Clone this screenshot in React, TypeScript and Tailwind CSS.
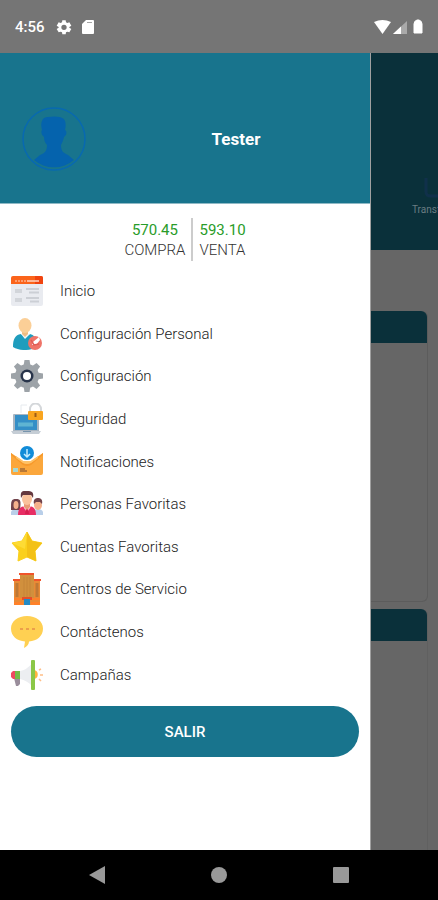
import type { ReactNode } from "react";

function Icon({ children }: { children: ReactNode }) {
  return (
    <svg viewBox="0 0 32 32" className="size-8 shrink-0" aria-hidden="true">
      {children}
    </svg>
  );
}

const HomeIcon = () => (
  <Icon>
    <path d="M0 8h32v21a2 2 0 0 1-2 2H2a2 2 0 0 1-2-2z" fill="#e9ebf0" />
    <path d="M2 1h28a2 2 0 0 1 2 2v6H0V3a2 2 0 0 1 2-2z" fill="#fb641b" />
    <path d="M24 1h6a2 2 0 0 1 2 2v6h-8z" fill="#f04410" />
    <path d="M4 6h11" stroke="#ffb08a" strokeWidth="1.500" strokeDasharray="2 1" />
    <path d="M16 6h12" stroke="#ffd5c2" strokeWidth="1.500" />
    <path d="M4 14h7v4H4zM4 23h7v4H4z" fill="#d2d5da" />
    <path d="M15 14h13M18 17.500h10M15 23h13M19 26.500h9" stroke="#cccfd5" strokeWidth="2" />
  </Icon>
);

const PersonalIcon = () => (
  <Icon>
    <path d="M2 29c0-8 2-12 8-13l4 3 5-3c4 1 6 4 7 7l-5 8c-7 2-14 1-19-2z" fill="#1f9dbd" />
    <path d="m10 16 4 5 5-5z" fill="#f6f6f6" />
    <path d="M11 12h6v4l-3 3-3-3z" fill="#f1bd83" />
    <ellipse cx="14" cy="7.500" rx="6.500" ry="7.500" fill="#fbcf97" />
    <circle cx="24" cy="25" r="7" fill="#ef7468" />
    <path d="m21 27 1-3 6-5 1 3-4 5z" fill="#fff" />
    <path d="m20 22 3 5 5-1" stroke="#e05e56" strokeWidth="1.500" fill="none" />
  </Icon>
);

const GearIcon = () => (
  <Icon>
    <g fill="#9da3a8">
      <circle cx="16" cy="16" r="12" />
      {[0, 45, 90, 135, 180, 225, 270, 315].map((angle) => (
        <path key={angle} d="M12.500 6 13.500 0h5l1 6z" transform={`rotate(${angle} 16 16)`} />
      ))}
    </g>
    <circle cx="16" cy="16" r="6.500" fill="#28344a" />
    <circle cx="16" cy="16" r="4" fill="#fff" />
  </Icon>
);

const SecurityIcon = () => (
  <Icon>
    <path d="M10 10V2h6" stroke="#e6eaee" fill="none" />
    <rect x="2" y="11" width="26" height="18" rx="1" fill="#a9b6c2" />
    <rect x="4" y="12" width="22" height="15" fill="#348fc7" />
    <path d="M7 21.500h15" stroke="#5fb4d2" strokeWidth="4" />
    <path d="M0 28h30l-2 3H2z" fill="#c5cdd5" />
    <path d="M12 28h8v1h-8z" fill="#7895ad" />
    <path d="M19 9V6a5.500 5.500 0 0 1 11 0v3" stroke="#d4d7da" strokeWidth="2" fill="none" />
    <rect x="17" y="8" width="15" height="9" rx="1" fill="#f9a51f" />
    <path d="M24.500 10v4" stroke="#9d5c18" strokeWidth="2" />
  </Icon>
);

const MailIcon = () => (
  <Icon>
    <path d="m0 7 12 8h8l12-8v20a2 2 0 0 1-2 2H2a2 2 0 0 1-2-2z" fill="#fba73c" />
    <path d="m0 7 12 10q4 2 8 0L32 7v2L20 19q-4 2-8 0L0 9z" fill="#f79a2c" />
    <path d="m5 10 7 5h8l7-5v2l-7 5q-4 2-8 0l-7-5z" fill="#ffc267" />
    <circle cx="16" cy="7" r="7" fill="#128cd8" />
    <path d="M16 3v8m-3-3 3 3 3-3" stroke="#c2ecff" strokeWidth="1.500" fill="none" />
    <path d="M2 22h5v4H2z" fill="#a5d8d4" />
    <path d="M9 23h5M9 25h7" stroke="#a36a34" strokeWidth="1.500" />
  </Icon>
);

const PeopleIcon = () => (
  <Icon>
    <path d="M0 27v-3c1-4 9-4 10 0v3zM22 27v-3c1-4 9-4 10 0v3z" fill="#b9cfe9" />
    <path d="M0 22c0-9 0-11 5-11s5 2 4 11z" fill="#71434b" />
    <ellipse cx="5" cy="17" rx="2.500" ry="4" fill="#f5b18c" />
    <ellipse cx="27" cy="17" rx="4" ry="5" fill="#f5b18c" />
    <path d="M23 16c-1-4 1-6 4-6s5 2 4 6l-2-2h-4z" fill="#71434b" />
    <path d="M7 27c0-7 3-9 9-9s9 2 9 9z" fill="#e72d64" />
    <path d="m12 18 4 7 4-7z" fill="#fbdde4" />
    <path d="m15 20-1 6h4l-1-6z" fill="#d61f50" />
    <path d="M13 14h6v5l-3 3-3-3z" fill="#e99a76" />
    <ellipse cx="16" cy="11" rx="5" ry="6" fill="#fac19b" />
    <path d="M10 10c-1-7 1-7 6-7s7 1 6 7l-2-3h-8z" fill="#65383f" />
  </Icon>
);

const StarIcon = () => (
  <Icon>
    <path
      d="m16 1 5 9 10 2-7 8 1 10-9-4-9 4 1-10-7-8 10-2z"
      fill="#fad01c"
      stroke="#fad01c"
      strokeLinejoin="round"
    />
    <path d="m16 1 5 9 10 2-7 8 1 10-9-4z" fill="#f3c116" />
    <path d="m16 1-2 17L1 12l10-2z" fill="#fddb35" />
  </Icon>
);

const BuildingIcon = () => (
  <Icon>
    <path d="M3 8h26v24H3z" fill="#e88a35" />
    <path d="M9 2h14v24H9z" fill="#d1903d" />
    <path d="M13 4v21M16 4v21M19 4v21" stroke="#c58438" />
    <path d="M8 0h15v2H8zM2 6h7v2H2zM23 6h7v2h-7z" fill="#f0542b" />
    <path d="M6 10v14M26 10v14" stroke="#bf7835" strokeWidth="3" />
    <path d="M3 25h26v2H3zM3 29h9v3H3zM20 29h9v3h-9z" fill="#ff8129" />
    <path d="M11 24h10v3H11z" fill="#e54f2a" />
    <path d="M13 26h6v6h-6z" fill="#248ac4" />
  </Icon>
);

const ChatIcon = () => (
  <Icon>
    <path
      d="M16 0c9 0 16 5 16 12.500C32 20 26 25 18 25.500c0 3-2 5-5 6.500l1-6.500C6 25 0 20 0 12.500S7 0 16 0z"
      fill="#ffd052"
    />
    <path d="M9 13h3m3 0h3m3 0h3" stroke="#ec9f4a" strokeWidth="2" />
  </Icon>
);

const CampaignIcon = () => (
  <Icon>
    <path d="M3 19h6v6l-2 2H5z" fill="#9a8d9b" />
    <path d="M2 12h4v8H2l-2-2v-4z" fill="#ef4961" />
    <path d="M4 12h5v8H4z" fill="#75bc47" />
    <path d="M9 12c6-1 8-4 12-7v22c-4-4-7-6-12-7z" fill="#eceef1" />
    <path d="M23 11c5 0 5 9 0 9z" fill="#ffb53c" />
    <rect x="20" y="1" width="4" height="30" rx="1" fill="#8bc747" />
    <path d="m28 11 2-1m-1 6h3m-4 4 2 2" stroke="#ffbe87" strokeWidth="1.500" />
  </Icon>
);

const menu = [
  { label: "Inicio", Picture: HomeIcon },
  { label: "Configuración Personal", Picture: PersonalIcon },
  { label: "Configuración", Picture: GearIcon },
  { label: "Seguridad", Picture: SecurityIcon },
  { label: "Notificaciones", Picture: MailIcon },
  { label: "Personas Favoritas", Picture: PeopleIcon },
  { label: "Cuentas Favoritas", Picture: StarIcon },
  { label: "Centros de Servicio", Picture: BuildingIcon },
  { label: "Contáctenos", Picture: ChatIcon },
  { label: "Campañas", Picture: CampaignIcon },
];

function StatusBar() {
  return (
    <header className="flex h-[53px] items-center bg-[#757575] pr-[13px] pl-[15px] text-white">
      <span className="text-[15px] leading-5 font-medium">4:56</span>
      <svg viewBox="0 0 24 24" className="ml-[11px] size-4" fill="currentColor" aria-hidden="true">
        <path
          fillRule="evenodd"
          d="m9.500 2-.5 3-2 1-3-1-3 5 3 2v1l-3 2 3 5 3-1 2 1 .5 3h5l.5-3 2-1 3 1 3-5-3-2v-1l3-2-3-5-3 1-2-1-.5-3zM12 8.500a4 4 0 1 1 0 8 4 4 0 0 1 0-8z"
        />
      </svg>
      <svg viewBox="0 0 12 14" className="ml-2.5 h-3.5 w-3" aria-hidden="true">
        <path d="M4 0h7a1 1 0 0 1 1 1v12a1 1 0 0 1-1 1H1a1 1 0 0 1-1-1V4z" fill="#fff" />
        <path d="M5 2.500h5" stroke="#a5a5a5" />
      </svg>
      <svg viewBox="0 0 54 16" className="ml-auto h-4 w-[54px]" aria-hidden="true">
        <path d="M3 3q8.500-4 17 0l-8.500 12z" fill="#fff" />
        <path d="M36 2v13H22z" fill="#a9a9a9" />
        <path d="M30 7.500V15h-8z" fill="#fff" />
        <path d="M43 5q0-3 3-4h2q3 1 3 4v9h-8z" fill="#fff" stroke="#fff" strokeLinejoin="round" />
      </svg>
    </header>
  );
}

function Drawer() {
  return (
    <aside className="flex min-w-0 flex-1 flex-col border-r border-[#a0a0a0] bg-white">
      <div className="flex h-[151px] items-center border-b border-[#8fb9c5] bg-[#18748d] pt-[22px] pl-[22px]">
        <svg viewBox="0 0 64 64" className="size-16 shrink-0" role="img" aria-label="Foto de perfil">
          <circle cx="32" cy="32" r="31" fill="none" stroke="#0869b1" strokeWidth="1.500" />
          <path
            d="M20 14c1-3 3-4 6-4 5-1 13-1 16 2 2 3 2 7 1 11 2 1 2 5-1 7-1 4-2 6-3 8 0 7 3 8 7 10l6 5a31 31 0 0 1-40 0l6-5c5-2 7-4 7-10-2-2-3-5-3-8-3-2-3-6-2-7-1-4-1-7 0-9z"
            fill="#0563ad"
          />
        </svg>
        <h1 className="ml-4 flex-1 text-center text-[17px] leading-6 font-bold text-white">Tester</h1>
      </div>

      <dl className="mt-3.5 flex h-[43px] justify-center text-[15px] leading-5 font-light">
        <div className="flex flex-col-reverse justify-center border-r-2 border-[#cccccc] pr-1.5 text-center">
          <dt className="text-[#333333]">COMPRA</dt>
          <dd className="font-normal text-[#299c29]">570.45</dd>
        </div>
        <div className="flex flex-col-reverse justify-center pl-1.5">
          <dt className="text-[#333333]">VENTA</dt>
          <dd className="font-normal text-[#299c29]">593.10</dd>
        </div>
      </dl>

      <nav className="mt-[9px] grid h-[426px] auto-rows-fr">
        {menu.map(({ label, Picture }) => (
          <a
            key={label}
            href="#"
            className="flex items-center gap-[17px] pl-[11px] text-[15px] leading-5 font-light text-[#222222]"
          >
            <Picture />
            <span>{label}</span>
          </a>
        ))}
      </nav>

      <button
        type="button"
        className="mx-[11px] mt-2.5 h-[51px] rounded-full bg-[#18748d] text-[15px] leading-5 font-medium text-white"
      >
        SALIR
      </button>
    </aside>
  );
}

function DimmedCard({ fill = false }: { fill?: boolean }) {
  return (
    <section
      className={
        fill
          ? "mr-2.5 flex-1 rounded-tr-md border-r border-[#606060]"
          : "mr-2.5 h-[291px] rounded-r-md border-r border-b border-[#5c5c5c]"
      }
    >
      <div className="h-8 rounded-tr-md bg-[#0a303a]" />
    </section>
  );
}

function DimmedPage() {
  return (
    <main className="flex w-[67px] shrink-0 flex-col overflow-hidden bg-[#666666]">
      <div className="flex h-[197px] flex-col items-start bg-[#0a303a] pt-[124px] pl-[41px]">
        <div className="flex flex-col items-center gap-1">
          <svg
            viewBox="0 0 42 21"
            className="h-[21px] w-[42px]"
            fill="none"
            stroke="#10304a"
            strokeWidth="3"
            aria-hidden="true"
          >
            <path d="M2 1v14q0 4 5 4h28q5 0 5-4V1" />
          </svg>
          <span className="text-[10px] leading-4 whitespace-nowrap text-[#697c82]">Transferencias</span>
        </div>
      </div>
      <div className="flex flex-1 flex-col gap-[7px] pt-[61px]">
        <DimmedCard />
        <DimmedCard fill />
      </div>
    </main>
  );
}

function NavigationBar() {
  return (
    <footer className="grid h-[50px] grid-cols-3 bg-black px-9 text-[#999999]">
      <button type="button" aria-label="Atrás" className="flex items-center justify-center">
        <svg viewBox="0 0 16 18" className="h-[18px] w-4" fill="currentColor">
          <path d="M16 0v18L0 9z" />
        </svg>
      </button>
      <button type="button" aria-label="Inicio del sistema" className="flex items-center justify-center">
        <span className="size-4 rounded-full bg-[#999999]" />
      </button>
      <button type="button" aria-label="Recientes" className="flex items-center justify-center">
        <span className="size-4 rounded-[1px] bg-[#999999]" />
      </button>
    </footer>
  );
}

export default function App() {
  return (
    <div className="flex min-h-screen flex-col font-[Roboto,sans-serif]">
      <StatusBar />
      <div className="flex flex-1">
        <Drawer />
        <DimmedPage />
      </div>
      <NavigationBar />
    </div>
  );
}
